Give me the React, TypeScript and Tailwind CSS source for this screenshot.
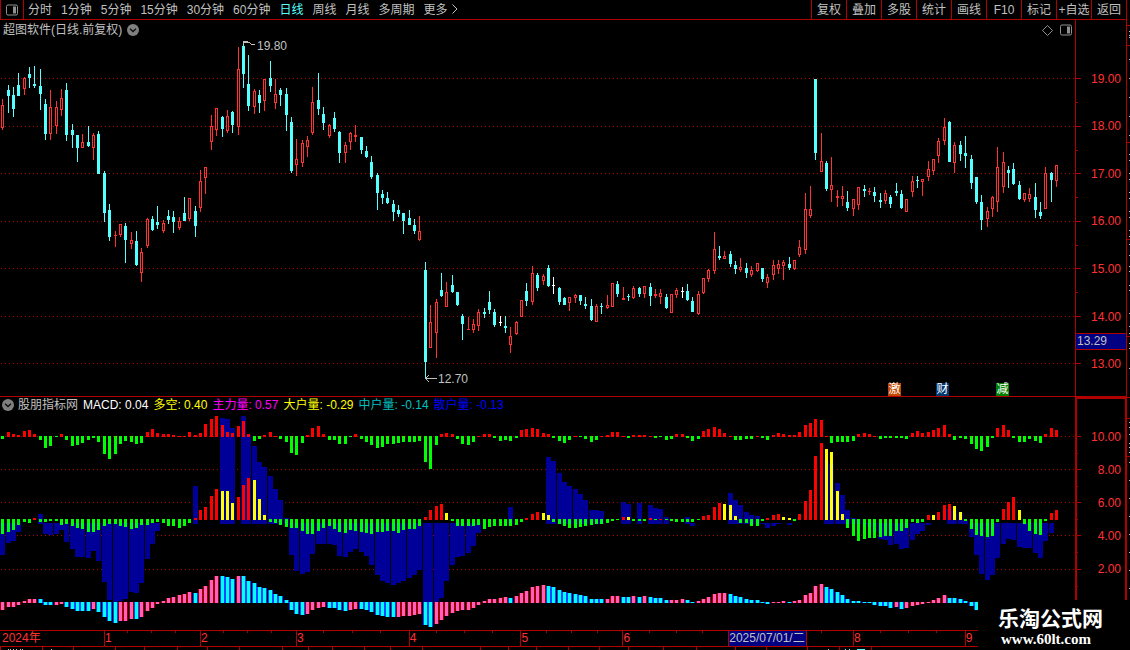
import type { ReactNode } from "react";

type Candle = [kind: string, high: number, top: number, bottom: number, low: number];

const RED = "#ff3232";
const CYAN = "#54ffff";
const LINE = "#b00000";
const PLOT_WIDTH = 1075;

const periods = ["分时", "1分钟", "5分钟", "15分钟", "30分钟", "60分钟", "日线", "周线", "月线", "多周期", "更多"];
const tools = ["复权", "叠加", "多股", "统计", "画线", "F10", "标记", "+自选", "返回"];

// r = up day, c = down day, w = unchanged
const candles: Candle[] = [
  ["r", 99, 105, 128, 130], ["c", 85, 90, 96, 113], ["c", 87, 95, 109, 117], ["c", 73, 85, 96, 96],
  ["r", 77, 78, 89, 95], ["c", 67, 74, 78, 88], ["c", 66, 84, 86, 88], ["c", 69, 86, 94, 110],
  ["c", 99, 104, 134, 140], ["r", 90, 107, 134, 140], ["r", 101, 107, 126, 134], ["r", 89, 98, 110, 116],
  ["c", 83, 90, 135, 141], ["c", 124, 130, 135, 148], ["c", 135, 135, 148, 162], ["r", 134, 142, 148, 148],
  ["c", 126, 142, 146, 147], ["r", 133, 135, 148, 160], ["c", 131, 134, 174, 174], ["c", 171, 173, 213, 222],
  ["c", 204, 210, 237, 241], ["r", 231, 235, 236, 247], ["r", 224, 224, 235, 237], ["c", 223, 226, 240, 263],
  ["r", 232, 240, 244, 249], ["c", 231, 241, 265, 266], ["r", 248, 252, 273, 282], ["r", 218, 219, 246, 248],
  ["c", 216, 219, 230, 231], ["c", 206, 222, 225, 229], ["r", 220, 223, 231, 233], ["c", 210, 216, 220, 224],
  ["c", 211, 217, 222, 233], ["r", 217, 221, 228, 230], ["c", 197, 213, 221, 221], ["r", 198, 198, 219, 221],
  ["c", 206, 211, 226, 237], ["r", 170, 181, 208, 212], ["r", 167, 167, 178, 194], ["r", 115, 126, 142, 150],
  ["r", 108, 108, 130, 136], ["c", 116, 117, 129, 137], ["r", 110, 116, 131, 133], ["c", 111, 112, 125, 133],
  ["r", 47, 69, 127, 135], ["c", 41, 46, 74, 88], ["c", 55, 84, 106, 111], ["r", 89, 91, 107, 114],
  ["c", 90, 95, 103, 113], ["r", 79, 79, 101, 111], ["c", 61, 78, 86, 92], ["r", 79, 94, 103, 109],
  ["c", 88, 90, 95, 106], ["c", 88, 94, 115, 131], ["c", 117, 122, 171, 173], ["r", 139, 159, 165, 176],
  ["r", 140, 143, 163, 167], ["r", 136, 140, 147, 157], ["r", 87, 102, 133, 135], ["c", 73, 100, 109, 115],
  ["c", 107, 114, 123, 130], ["r", 124, 125, 136, 138], ["c", 112, 118, 129, 132], ["c", 131, 132, 153, 163],
  ["r", 142, 145, 153, 163], ["r", 132, 133, 142, 150], ["r", 125, 135, 137, 142], ["c", 137, 137, 150, 154],
  ["c", 146, 151, 157, 158], ["c", 156, 162, 177, 179], ["c", 173, 175, 193, 210], ["c", 190, 194, 198, 204],
  ["c", 192, 198, 203, 204], ["c", 200, 204, 212, 221], ["c", 205, 210, 214, 217], ["c", 213, 213, 221, 234],
  ["c", 210, 218, 225, 225], ["c", 219, 225, 231, 234], ["r", 216, 231, 240, 241], ["c", 262, 270, 362, 378],
  ["r", 305, 322, 348, 348], ["r", 299, 302, 333, 358], ["c", 273, 290, 296, 297], ["r", 282, 292, 307, 307],
  ["c", 275, 285, 292, 293], ["c", 292, 292, 305, 306], ["c", 314, 316, 324, 340], ["r", 317, 329, 330, 330],
  ["r", 319, 324, 330, 333], ["r", 309, 312, 326, 331], ["c", 308, 312, 314, 318], ["c", 291, 302, 310, 314],
  ["c", 309, 312, 325, 327], ["w", 316, 322, 323, 326], ["c", 316, 326, 328, 333], ["r", 327, 336, 345, 353],
  ["r", 321, 322, 334, 335], ["r", 300, 300, 317, 317], ["c", 283, 291, 301, 306], ["r", 266, 273, 302, 305],
  ["c", 273, 275, 288, 291], ["r", 274, 276, 281, 285], ["c", 265, 268, 286, 287], ["w", 277, 285, 286, 294],
  ["c", 287, 288, 302, 305], ["c", 297, 298, 305, 305], ["r", 297, 297, 303, 311], ["r", 294, 295, 298, 303],
  ["c", 295, 295, 301, 305], ["c", 297, 304, 306, 309], ["c", 299, 306, 320, 321], ["r", 304, 306, 322, 322],
  ["c", 303, 306, 307, 314], ["r", 295, 305, 308, 309], ["r", 283, 283, 307, 307], ["c", 281, 284, 294, 297],
  ["r", 287, 298, 300, 300], ["c", 294, 296, 297, 301], ["r", 286, 288, 298, 299], ["c", 287, 288, 294, 297],
  ["r", 286, 286, 294, 298], ["c", 283, 287, 296, 306], ["r", 289, 294, 296, 298], ["r", 289, 293, 297, 304],
  ["c", 294, 297, 308, 309], ["r", 294, 294, 313, 313], ["r", 288, 290, 295, 298], ["w", 287, 291, 292, 298],
  ["c", 284, 291, 300, 301], ["c", 297, 301, 312, 312], ["r", 291, 294, 314, 315], ["r", 278, 278, 293, 294],
  ["r", 269, 270, 279, 282], ["r", 232, 249, 271, 274], ["c", 246, 256, 258, 260], ["r", 251, 256, 259, 259],
  ["c", 251, 254, 264, 267], ["c", 261, 265, 269, 274], ["r", 258, 267, 270, 272], ["c", 263, 268, 273, 278],
  ["r", 266, 270, 275, 277], ["r", 263, 263, 271, 272], ["c", 268, 268, 279, 282], ["r", 274, 277, 283, 288],
  ["r", 260, 265, 275, 280], ["r", 260, 264, 269, 274], ["r", 260, 262, 266, 280], ["c", 257, 264, 268, 270],
  ["r", 260, 260, 269, 270], ["r", 240, 247, 255, 257], ["r", 193, 209, 250, 254], ["r", 186, 209, 216, 218],
  ["c", 79, 79, 153, 160], ["r", 133, 161, 172, 172], ["c", 161, 163, 189, 191], ["r", 157, 185, 190, 202],
  ["r", 190, 196, 198, 207], ["r", 186, 196, 199, 206], ["c", 191, 202, 208, 211], ["r", 199, 199, 209, 216],
  ["r", 187, 187, 205, 210], ["c", 185, 189, 191, 197], ["r", 188, 191, 192, 195], ["c", 187, 192, 196, 202],
  ["c", 193, 200, 202, 208], ["r", 190, 193, 201, 204], ["c", 195, 197, 204, 208], ["c", 183, 191, 193, 196],
  ["c", 190, 194, 208, 209], ["r", 199, 199, 212, 212], ["r", 176, 181, 192, 197], ["c", 176, 180, 181, 188],
  ["r", 179, 179, 182, 196], ["r", 161, 169, 177, 181], ["r", 159, 159, 171, 175], ["r", 138, 141, 156, 163],
  ["r", 118, 127, 141, 145], ["c", 121, 122, 162, 162], ["r", 142, 145, 163, 173], ["c", 141, 145, 154, 161],
  ["c", 136, 153, 156, 168], ["c", 155, 159, 183, 189], ["c", 177, 177, 202, 204], ["c", 195, 202, 220, 230],
  ["r", 207, 211, 219, 227], ["r", 196, 197, 209, 217], ["r", 147, 167, 202, 212], ["r", 152, 162, 187, 193],
  ["c", 166, 170, 173, 188], ["c", 163, 169, 184, 185], ["c", 181, 185, 199, 200], ["r", 193, 193, 200, 202],
  ["r", 188, 194, 199, 202], ["c", 183, 197, 210, 218], ["c", 202, 212, 216, 219], ["r", 167, 173, 209, 209],
  ["c", 172, 173, 180, 202], ["r", 165, 165, 181, 187],
];

const longShort = [
  -3, 5, 3, 2, 6, 7, 3, -4, -12, -10, -1, 3, -4, -10, -9, -7, -4, -2, -6, -18,
  -23, -18, -8, -5, -6, -8, -7, 5, 8, 4, 3, 3, 2, 1, 1, 5, 2, 4, 13, 18,
  21, 12, 5, 4, 11, 16, 3, -5, -3, 2, 5, 1, -3, -6, -17, -19, -7, 2, 9, 11,
  3, -4, -4, -8, -8, -1, 3, -3, -6, -9, -12, -11, -8, -8, -7, -6, -6, -6, -5, -26,
  -33, -9, 3, 4, 3, -3, -8, -9, -6, 1, 3, 3, -2, -5, -4, -5, -2, 7, 8, 9,
  8, 4, 3, -2, -5, -7, -4, 1, -1, -3, -6, -4, 1, 2, 5, 5, 1, -2, 2, 2,
  2, 1, -2, -1, -4, -3, 3, 3, -2, -5, -3, 6, 8, 10, 8, 4, 1, -4, -4, -3,
  -3, 1, -2, -4, 2, 4, 3, 2, 2, 5, 12, 14, 18, 17, 1, -7, -6, -6, -6, -5,
  3, 4, 3, 1, -3, -2, -2, -2, -2, -3, 4, 6, 4, 5, 7, 9, 12, 3, -4, -2,
  -3, -8, -13, -15, -11, -2, 9, 12, 7, -2, -6, -6, -3, -5, -7, 3, 9, 7,
];

const mainForce = [
  -15, -13, -11, -6, -3, -4, 2, -3, -3, -2, -2, -6, -5, -7, -9, -10, -13, -13, -11, -7,
  -5, -5, -7, -8, -10, -9, -6, -6, -4, -3, -4, -7, -7, -9, -7, -4, 2, 10, 13, 24,
  31, 29, 29, 17, 23, 35, 42, 40, 21, 5, -3, -4, -6, -8, -9, -9, -12, -15, -15, -12,
  -9, -7, -10, -13, -14, -11, -12, -13, -14, -15, -13, -13, -12, -12, -14, -11, -10, -10, -7, 3,
  10, 14, 16, 7, -2, -7, -7, -7, -7, -6, -10, -8, -7, -7, -7, -7, -6, -3, 2, 6,
  8, 7, 5, -3, -5, -7, -9, -9, -8, -7, -6, -5, -5, -4, -2, -1, 3, 3, -2, -2,
  -2, 2, -1, 1, -1, -2, -3, -3, -3, -3, -1, 4, 5, 13, 17, 16, 15, 4, -4, -4,
  -7, -7, -2, 2, 5, 6, 3, 2, -2, 6, 19, 30, 64, 77, 71, 68, 29, 6, -9, -17,
  -22, -20, -19, -19, -18, -17, -17, -12, -12, -9, -3, -4, -3, 5, 5, 8, 15, 16, 14, 8,
  -2, -10, -16, -17, -18, -17, -3, 11, 18, 23, 10, -5, -12, -15, -16, -2, 7, 10,
];

// days on which the main force is selling into strength
const fading = new Set([
  41, 42, 43, 47, 48, 49, 83, 101, 102, 117, 135, 136, 137, 146, 147, 154, 155, 156, 157, 174, 178, 179, 190,
]);

const retail = [
  -32, -20, -18, -9, 0, 0, 0, 10, -11, -12, -11, -7, -19, -26, -34, -34, -35, -28, -38, -59,
  -77, -79, -78, -76, -69, -70, -60, -36, -21, -8, 0, 0, 0, 0, 0, 0, 38, 0, 0, 0,
  0, 106, 105, 96, 0, 108, 89, 78, 62, 57, 48, 35, 24, 6, -32, -48, -51, -49, -31, -21,
  -21, -21, -22, -33, -34, -29, -26, -29, -33, -42, -52, -58, -60, -62, -60, -58, -55, -52, -47, -79,
  -79, -79, -75, -58, -42, -34, -33, -30, -23, -10, 0, 0, 0, 0, 0, 17, 0, 0, 0, 0,
  0, 0, 67, 63, 51, 42, 38, 35, 30, 24, 14, 14, 13, 0, 0, 0, 22, 20, 0, 21,
  0, 19, 16, 15, 7, 0, 0, 0, 7, -3, 0, 0, 0, 0, 0, 0, 31, 24, 19, 12,
  9, 8, -1, -5, -3, -1, 0, -2, 0, 0, 0, 0, 0, 0, 64, 60, 41, 29, 14, 6,
  5, -1, -4, -9, -16, -17, -22, -21, -26, -25, -17, -11, -8, -2, 0, 0, 0, 15, 13, 11,
  3, -14, -32, -51, -57, -52, -35, -21, -16, -17, -24, -25, -25, -30, -35, -18, -10, 0,
];

const macd = [
  -8, -5, -5, -3, 2, 4, 4, 4, -3, -3, -3, -2, -5, -7, -9, -9, -9, -7, -10, -15,
  -19, -21, -19, -19, -17, -17, -15, -9, -6, -2, 2, 5, 6, 8, 9, 11, 10, 14, 17, 23,
  27, 27, 26, 24, 27, 27, 22, 20, 16, 15, 13, 9, 7, 3, -8, -12, -13, -12, -8, -6,
  -5, -6, -6, -8, -9, -8, -7, -7, -8, -10, -13, -14, -15, -15, -15, -14, -14, -13, -12, -23,
  -25, -22, -18, -14, -11, -9, -8, -8, -6, -3, 2, 4, 4, 5, 6, 5, 7, 10, 12, 16,
  17, 18, 17, 16, 13, 11, 10, 9, 8, 7, 4, 4, 4, 4, 7, 7, 6, 6, 7, 6,
  7, 6, 5, 5, 3, 3, 3, 4, 3, 1, 2, 4, 6, 9, 10, 10, 9, 7, 6, 4,
  3, 3, 1, -2, 1, 1, 2, 1, 2, 3, 8, 10, 17, 19, 16, 14, 11, 8, 4, 2,
  2, 1, 1, -3, -4, -4, -6, -5, -7, -6, -4, -3, -2, 1, 3, 5, 8, 5, 5, 4,
  2, -4, -8,
];

// one letter per macd bar: p = rising, c = falling
const macdTone =
  "pppppppcccppccccc" + "pccccppp" + "c" + "pppppppppp" + "c" + "pppp" + "ccc" + "p" + "ccccccccccc" + "c" +
  "pppp" + "cccc" + "pp" + "ccccccc" + "ppppp" + "cc" + "pppppppppppppp" + "c" + "pppppp" + "ccccccccccc" +
  "ppp" + "cc" + "p" + "c" + "p" + "cccc" + "ppp" + "cc" + "pppppp" + "cccccccc" + "ppp" + "c" + "pppppp" +
  "ccccccccccccc" + "p" + "c" + "pppppppp" + "cccccc";

const priceTicks = [78, 126, 173, 221, 268, 316, 363];
const valueTicks = [436, 469, 502, 535, 569];

const readouts = [
  { name: "多空", value: "0.40", color: "text-[#ffff00]" },
  { name: "主力量", value: "0.57", color: "text-[#ff00ff]" },
  { name: "大户量", value: "-0.29", color: "text-[#ffff00]" },
  { name: "中户量", value: "-0.14", color: "text-[#00c0c0]" },
  { name: "散户量", value: "-0.13", color: "text-[#0000ff]" },
];

const months = [
  { label: "2024年", span: 103 },
  { label: "1", span: 96 },
  { label: "2", span: 96 },
  { label: "3", span: 113 },
  { label: "4", span: 112 },
  { label: "5", span: 102 },
  { label: "6", span: 106 },
  { label: "2025/07/01/二", span: 78, current: true },
  { label: "", span: 46 },
  { label: "8", span: 112 },
  { label: "9", span: 162 },
];

const events = [
  { label: "激", x: 888, color: "bg-[#c04800]" },
  { label: "财", x: 936, color: "bg-[#003870]" },
  { label: "减", x: 996, color: "bg-[#008000]" },
];

const barX = (i: number) => Math.floor(2.66 + 5.35 * i);
const leftOf = (x: number) => ({ left: `${(x / PLOT_WIDTH) * 100}%` });

function Grid({ ys }: { ys: number[] }) {
  return (
    <>
      {ys.map((y) => (
        <line key={y} x1="1" x2="1075" y1={y + 0.5} y2={y + 0.5} stroke={LINE} strokeDasharray="1 3" />
      ))}
    </>
  );
}

function Bar({ i, value, base, width, fill }: { i: number; value: number; base: number; width: number; fill: string }) {
  if (!value) return null;
  const x = barX(i) - (width - 1) / 2;
  return <rect x={x} y={value > 0 ? base + 1 - value : base} width={width} height={Math.abs(value)} fill={fill} />;
}

function Plot({ top, height, children }: { top: number; height: number; children: ReactNode }) {
  return (
    <svg
      className="block h-full w-full"
      viewBox={`0 ${top} ${PLOT_WIDTH} ${height}`}
      preserveAspectRatio="none"
      shapeRendering="crispEdges"
    >
      {children}
    </svg>
  );
}

function CandleStick({ i, candle }: { i: number; candle: Candle }) {
  const [kind, high, top, bottom, low] = candle;
  const x = barX(i);
  const color = kind === "r" ? RED : kind === "c" ? CYAN : "#ffffff";
  const hollow = kind === "r" && bottom - top > 2;

  return (
    <g fill={color}>
      <rect x={x} y={high} width={1} height={top - high} />
      <rect x={x} y={bottom} width={1} height={low - bottom} />
      {hollow ? (
        <rect x={x - 0.5} y={top + 0.5} width={2} height={bottom - top - 1} fill="none" stroke={color} />
      ) : (
        <rect x={x - 1} y={top} width={3} height={bottom - top} />
      )}
    </g>
  );
}

function ChevronBadge() {
  return (
    <svg className="size-3" viewBox="0 0 12 12">
      <circle cx="6" cy="6" r="6" fill="#808080" />
      <path d="M3 4.8 6 7.6 9 4.8" fill="none" stroke="#101010" strokeWidth="1.4" />
    </svg>
  );
}

function PanelIcon() {
  return (
    <svg className="h-3 w-3" viewBox="0 0 12 12">
      <rect x="0.5" y="1" width="11" height="10" rx="1.5" fill="none" stroke="#909090" />
      <rect x="7" y="2.5" width="3" height="7" fill="#909090" />
    </svg>
  );
}

function Toolbar() {
  return (
    <header className="flex h-5 justify-between border-b border-[#b00000]">
      <div className="flex">
        <button aria-label="侧栏" className="flex w-6 items-center justify-center border-x border-[#b00000]">
          <PanelIcon />
        </button>
        <nav className="flex items-center gap-[9px] pl-1">
          {periods.map((p) => (
            <button key={p} className={p === "日线" ? "text-[#54ffff]" : ""}>
              {p}
            </button>
          ))}
        </nav>
        <svg className="my-1 ml-1 h-[10px] w-[6px]" viewBox="0 0 6 10">
          <path d="M0.5 0.5 5 5 0.5 9.5" fill="none" stroke="#c0c0c0" />
        </svg>
      </div>
      <div className="flex">
        {tools.map((t) => (
          <button key={t} className="w-[35px] border-l border-[#b00000] whitespace-nowrap">
            {t}
          </button>
        ))}
      </div>
    </header>
  );
}

function PricePanel() {
  return (
    <section className="flex h-[377px] border-b border-[#b00000]">
      <div className="flex min-w-0 flex-1 flex-col">
        <div className="flex h-5 items-center justify-between pr-[3px] pl-[3px]">
          <div className="flex items-center gap-[5px]">
            <h1>超图软件(日线.前复权)</h1>
            <button aria-label="展开">
              <ChevronBadge />
            </button>
          </div>
          <div className="flex items-center gap-[7px]">
            <svg className="size-[11px]" viewBox="0 0 11 11">
              <path d="M5.5 0.5 10.5 5.5 5.5 10.5 0.5 5.5Z" fill="none" stroke="#909090" />
            </svg>
            <PanelIcon />
          </div>
        </div>
        <div className="relative min-h-0 flex-1">
          <Plot top={40} height={356}>
            <Grid ys={priceTicks} />
            {candles.map((c, i) => (
              <CandleStick key={i} i={i} candle={c} />
            ))}
            <path d="M243.5 44 V41.5 H248 M244 42.5 H249 L252 44.5 H255" fill="none" stroke="#c0c0c0" />
            <path d="M425 378.5 H437 M429 375 L425.5 378.5 L429 382" fill="none" stroke="#c0c0c0" />
          </Plot>
          <span className="absolute -top-[2px]" style={leftOf(257)}>
            19.80
          </span>
          <span className="absolute bottom-[9px]" style={leftOf(438)}>
            12.70
          </span>
          {events.map((e) => (
            <button
              key={e.label}
              className={`absolute bottom-0 size-[13px] leading-[13px] text-white ${e.color}`}
              style={leftOf(e.x)}
            >
              {e.label}
            </button>
          ))}
        </div>
      </div>
      <div className="relative w-[51px] border-l border-[#b00000] pr-[5px] text-[#ff3232]">
        <svg className="absolute top-0 left-0 h-[376px] w-[5px]" viewBox="0 20 5 376" shapeRendering="crispEdges">
          {priceTicks.map((y, i) => (
            <g key={y} fill={LINE}>
              <rect y={y} width="5" height="1" />
              {i < 6 && <rect y={y + 24} width="2" height="1" />}
            </g>
          ))}
        </svg>
        <ol className="mt-[35px] grid h-[333px] grid-rows-7 items-center text-right">
          {["19.00", "18.00", "17.00", "16.00", "15.00", "14.00", "13.00"].map((p) => (
            <li key={p}>{p}</li>
          ))}
        </ol>
        <output className="absolute top-[313px] left-0 h-[17px] w-full border-y border-[#b00000] bg-[#000080] pl-px leading-[15px] text-[#c0c0c0]">
          13.29
        </output>
      </div>
    </section>
  );
}

function IndicatorPanel() {
  return (
    <section className="flex h-[233px]">
      <div className="flex min-w-0 flex-1 flex-col">
        <div className="flex h-4 items-center gap-[5px] pl-[2px] whitespace-nowrap">
          <button aria-label="指标菜单">
            <ChevronBadge />
          </button>
          <h2 className="-ml-px">股朋指标网</h2>
          <span className="text-white">MACD: 0.04</span>
          {readouts.map((r) => (
            <span key={r.name} className={r.color}>
              {r.name}: {r.value}
            </span>
          ))}
        </div>
        <div className="min-h-0 flex-1">
          <Plot top={413} height={217}>
            <Grid ys={valueTicks} />
            {retail.map((v, i) => (
              <Bar key={i} i={i} value={v} base={523} width={5} fill="#000098" />
            ))}
            {longShort.map((v, i) => (
              <Bar key={i} i={i} value={v} base={436} width={3} fill={v > 0 ? "#ff0000" : "#00ff00"} />
            ))}
            {mainForce.map((v, i) => (
              <Bar
                key={i}
                i={i}
                value={v}
                base={519}
                width={3}
                fill={v < 0 ? "#00ff00" : fading.has(i) ? "#ffff00" : "#ff0000"}
              />
            ))}
            {macd.map((v, i) => (
              <g key={i}>
                <Bar i={i} value={v} base={602} width={5} fill={macdTone[i] === "p" ? "#980000" : "#0048ff"} />
                <Bar i={i} value={v} base={602} width={3} fill={macdTone[i] === "p" ? "#ff60c0" : "#00ffff"} />
              </g>
            ))}
          </Plot>
        </div>
      </div>
      <div className="relative w-[51px] border-t-2 border-r border-l-2 border-[#b00000] pr-1 text-[#ff3232]">
        <svg className="absolute top-0 left-0 h-[200px] w-1" viewBox="0 399 4 200" shapeRendering="crispEdges">
          {valueTicks.map((y) => (
            <g key={y} fill={LINE}>
              <rect y={y} width="4" height="1" />
              <rect y={y + 17} width="1" height="1" />
            </g>
          ))}
        </svg>
        <ol className="mt-[21px] grid h-[166px] grid-rows-5 items-center text-right">
          {["10.00", "8.00", "6.00", "4.00", "2.00"].map((p) => (
            <li key={p}>{p}</li>
          ))}
        </ol>
      </div>
    </section>
  );
}

function TimeAxis() {
  const ticks = [127, 151, 175, 223, 247, 271, 323, 352, 380, 436, 464, 492, 546, 571, 597, 649, 676, 702, 821, 880, 908, 936];

  return (
    <div className="relative h-[17px] border-y border-[#b00000]">
      <svg className="absolute h-[2px] w-full" viewBox="0 0 1126 2" preserveAspectRatio="none">
        {ticks.map((x) => (
          <rect key={x} x={x} width="1" height="2" fill={LINE} />
        ))}
      </svg>
      <ol className="flex h-full leading-[15px] text-[#ff3232]">
        {months.map((m, i) => (
          <li
            key={i}
            className={`min-w-0 overflow-hidden whitespace-nowrap ${i ? "border-l border-[#b00000]" : "pl-[2px]"} ${
              m.current ? "bg-[#000080] text-[#c0c0c0]" : ""
            }`}
            style={{ flex: `${m.span} 1 0px` }}
          >
            {m.label}
          </li>
        ))}
      </ol>
    </div>
  );
}

// top edge of the quote ticker that runs along the bottom
function TickerEdge() {
  const cells = [0, 42, 73, 115, 144, 177, 207, 239, 282, 308, 332, 364, 390, 422, 480, 508, 536, 568, 599, 628, 663, 696, 735, 766, 807, 839, 871];
  const text = [8, 10, 13, 16, 20, 22, 51, 828, 845, 849, 857, 859, 861, 863];

  return (
    <svg className="block h-[3px] w-full" viewBox="0 0 1126 3" preserveAspectRatio="none" shapeRendering="crispEdges">
      {cells.map((x) => (
        <rect key={x} x={x} width="1" height="3" fill={LINE} />
      ))}
      {text.map((x) => (
        <rect key={x} x={x} y="2" width={x > 856 ? 2 : 1} height="1" fill={x > 840 ? CYAN : "#c0c0c0"} />
      ))}
    </svg>
  );
}

// left edge of the order book column
function SideEdge() {
  const rules = [25, 45, 142, 239, 336, 397, 418, 456];
  const dots = [
    31, 35, 37, 59, 78, 97, 116, 135, 154, 160, 173, 179, 192, 198, 211, 217, 230, 236, 244, 255, 266, 271, 285,
    290, 313, 326, 333, 343, 348, 368, 422, 427, 434, 443, 447, 452, 462, 480, 498, 516, 534, 552, 570, 588,
  ];

  return (
    <svg className="w-1 border-l border-[#b00000]" viewBox="0 0 3 650" preserveAspectRatio="none" shapeRendering="crispEdges">
      {rules.map((y) => (
        <rect key={y} y={y} width="3" height="1" fill={LINE} />
      ))}
      {dots.map((y) => (
        <rect key={y} x="2" y={y} width="1" height="1" fill="#c0c0c0" />
      ))}
    </svg>
  );
}

export default function App() {
  return (
    <div className="relative flex min-h-screen overflow-hidden bg-black font-['Liberation_Sans','Noto_Sans_CJK_SC',sans-serif] text-[12px] leading-4 text-[#c0c0c0]">
      <main className="min-w-0 flex-1">
        <Toolbar />
        <PricePanel />
        <IndicatorPanel />
        <TimeAxis />
        <TickerEdge />
      </main>
      <SideEdge />
      <footer className="absolute right-0 bottom-0 flex h-[50px] w-[152px] flex-col bg-black pt-2 pl-5 text-white">
        <strong className="text-[21px] leading-[22px]">乐淘公式网</strong>
        <a
          href="http://www.60lt.com"
          className="pl-[3px] font-['Liberation_Serif',serif] text-[15px] leading-[18px] font-bold"
        >
          www.60lt.com
        </a>
      </footer>
    </div>
  );
}
